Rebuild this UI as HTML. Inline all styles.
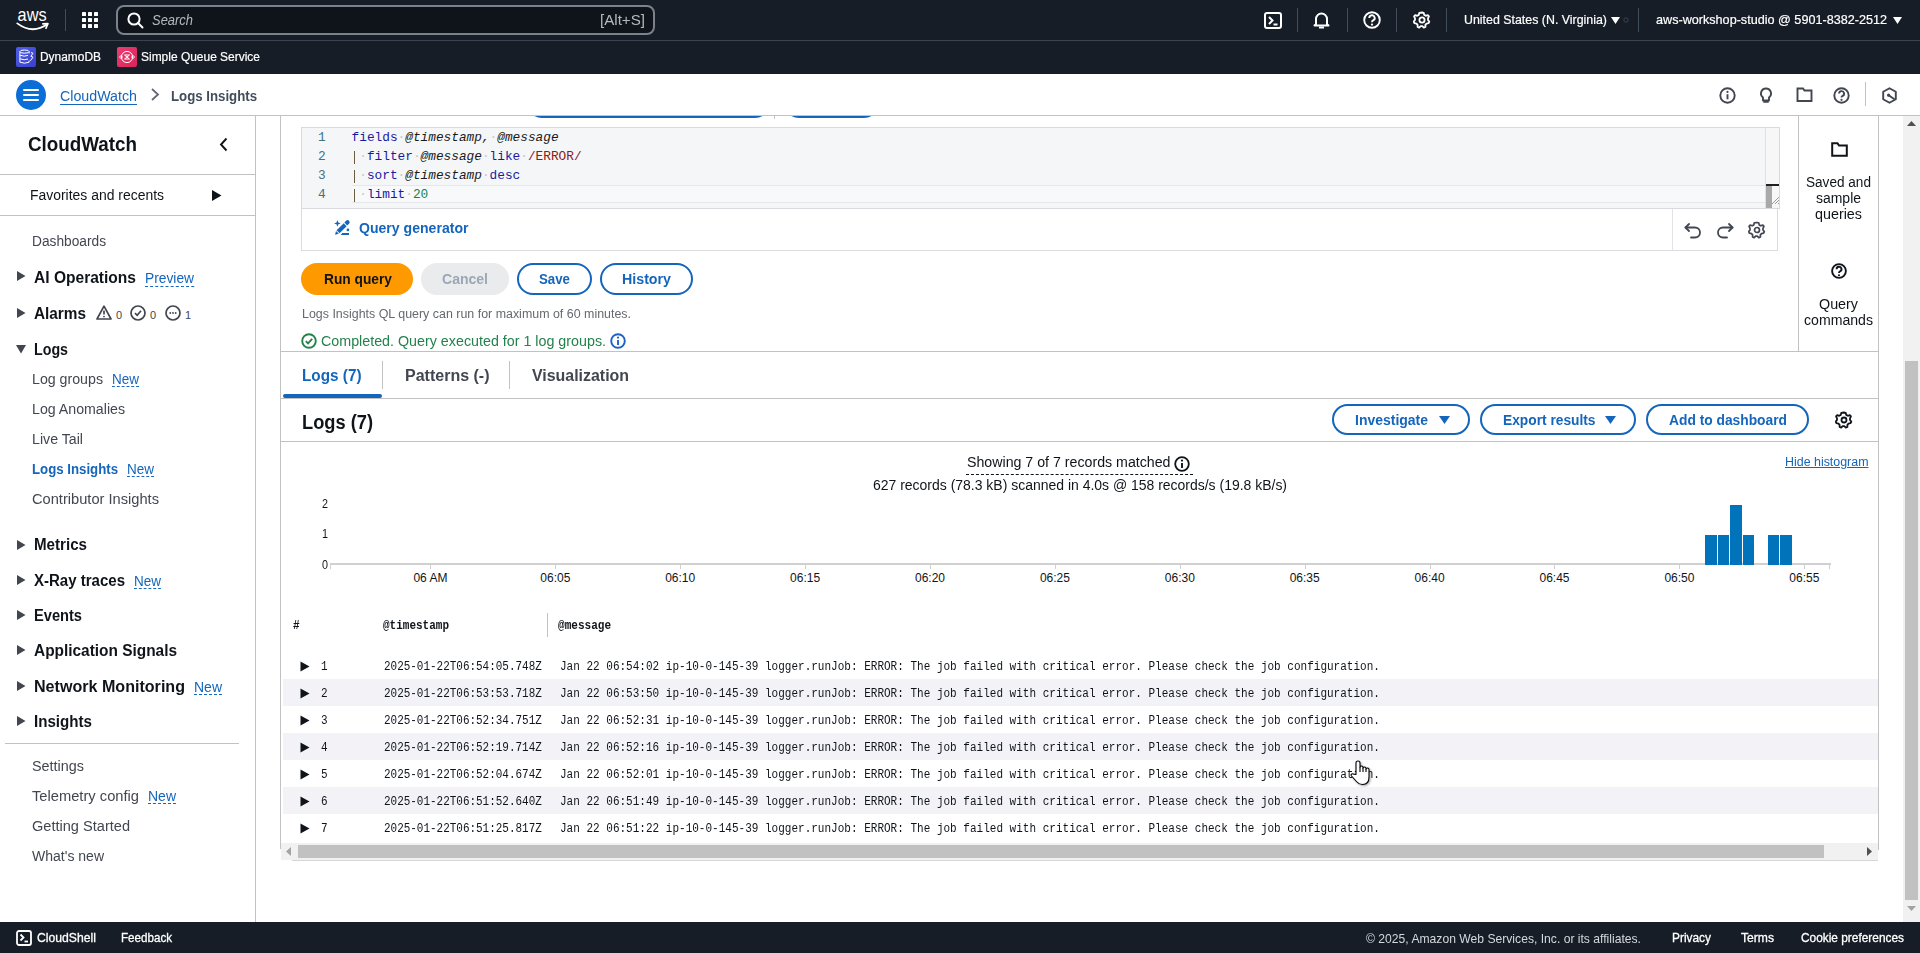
<!DOCTYPE html>
<html><head><meta charset="utf-8"><title>CloudWatch Logs Insights</title>
<style>
html,body{margin:0;padding:0;width:1920px;height:953px;overflow:hidden;background:#fff;}
body{position:relative;font-family:"Liberation Sans", sans-serif;color:#0f141a;}
.t{position:absolute;white-space:pre;}
.r{position:absolute;box-sizing:border-box;}
</style></head><body>
<div class="r" style="left:0px;top:0px;width:1920px;height:74px;background:#161d26;"></div>
<div class="r" style="left:0px;top:40px;width:1920px;height:1px;background:#3d4450;"></div>
<svg class="r" style="left:10px;top:5px;" width="44" height="28" viewBox="0 0 44 28"><text x="7.6" y="15.7" font-family="Liberation Sans" font-size="18.5" fill="#fff" textLength="29" lengthAdjust="spacingAndGlyphs">aws</text><path d="M7.3 18.4 Q22.5 29.8 37.6 19" stroke="#fff" stroke-width="1.8" fill="none" stroke-linecap="round"/><path d="M32.9 18.9 L37.8 18.6 L36 23.2" stroke="#fff" stroke-width="1.7" fill="none" stroke-linecap="round" stroke-linejoin="round"/></svg>
<div class="r" style="left:65px;top:9px;width:1px;height:22px;background:#414d5c;"></div>
<svg class="r" style="left:82px;top:12px;" width="16" height="16" viewBox="0 0 16 16"><rect x="0" y="0" width="4" height="4" rx="0.6" fill="#fff"/><rect x="0" y="6" width="4" height="4" rx="0.6" fill="#fff"/><rect x="0" y="12" width="4" height="4" rx="0.6" fill="#fff"/><rect x="6" y="0" width="4" height="4" rx="0.6" fill="#fff"/><rect x="6" y="6" width="4" height="4" rx="0.6" fill="#fff"/><rect x="6" y="12" width="4" height="4" rx="0.6" fill="#fff"/><rect x="12" y="0" width="4" height="4" rx="0.6" fill="#fff"/><rect x="12" y="6" width="4" height="4" rx="0.6" fill="#fff"/><rect x="12" y="12" width="4" height="4" rx="0.6" fill="#fff"/></svg>
<div class="r" style="left:116px;top:5px;width:539px;height:30px;border:2px solid #7b828c;border-radius:8px;background:#0f131a;"></div>
<svg class="r" style="left:127px;top:12px;" width="17" height="17" viewBox="0 0 17 17"><circle cx="7" cy="7" r="5.6" stroke="#fff" stroke-width="2" fill="none"/><path d="M11 11 L15.5 15.5" stroke="#fff" stroke-width="2" stroke-linecap="round"/></svg>
<div class="t" style="left:152px;top:13.00px;font-size:14px;line-height:14px;color:#b4b9c0;font-style:italic;transform:scaleX(0.9243);transform-origin:0 0;">Search</div>
<div class="t" style="left:600px;top:13.00px;font-size:14px;line-height:14px;color:#b4b9c0;transform:scaleX(1.0807);transform-origin:0 0;">[Alt+S]</div>
<svg class="r" style="left:1264px;top:12px;" width="18" height="17" viewBox="0 0 18 17"><rect x="1" y="1" width="16" height="15" rx="2" stroke="#fff" stroke-width="2" fill="none"/><path d="M5 5 L8.5 8.5 L5 12" stroke="#fff" stroke-width="2" fill="none"/><path d="M9.5 12.5 H13.5" stroke="#fff" stroke-width="2"/></svg>
<div class="r" style="left:1297px;top:8px;width:1px;height:24px;background:#414d5c;"></div>
<svg class="r" style="left:1313px;top:11px;" width="17" height="18" viewBox="0 0 17 18"><path d="M3 13 V8 a5.5 5.5 0 0 1 11 0 V13 L15.5 14.5 H1.5 Z" stroke="#fff" stroke-width="2" fill="none" stroke-linejoin="round"/><path d="M6 16.5 H11" stroke="#fff" stroke-width="2"/></svg>
<div class="r" style="left:1347px;top:8px;width:1px;height:24px;background:#414d5c;"></div>
<svg class="r" style="left:1363px;top:11px;" width="18" height="18" viewBox="0 0 18 18"><circle cx="9" cy="9" r="7.8" stroke="#fff" stroke-width="1.9" fill="none"/><path d="M6.3 7 a2.7 2.7 0 1 1 3.8 2.4 c-0.8 0.4 -1.1 0.9 -1.1 1.8" stroke="#fff" stroke-width="1.9" fill="none"/><circle cx="9" cy="13.6" r="1.1" fill="#fff"/></svg>
<div class="r" style="left:1396px;top:8px;width:1px;height:24px;background:#414d5c;"></div>
<svg class="r" style="left:1413px;top:11px;" width="18" height="18" viewBox="0 0 18 18"><path d="M9 1.5 l1.7 0.3 0.5 2.1 1.6 0.9 2-0.7 1.1 1.3 -0.9 2 0 1.6 1.3 1.6 -0.7 1.6 -2.1 0.4 -1.1 1.3 0 2.1 -1.6 0.6 -1.5-1.5 h-1.6 l-1.5 1.5 -1.6-0.6 0-2.1 -1.1-1.3 -2.1-0.4 -0.7-1.6 1.3-1.6 0-1.6 -0.9-2 1.1-1.3 2 0.7 1.6-0.9 0.5-2.1 z" stroke="#fff" stroke-width="1.8" fill="none" stroke-linejoin="round"/><circle cx="9" cy="9" r="2.6" stroke="#fff" stroke-width="1.8" fill="none"/></svg>
<div class="r" style="left:1446px;top:8px;width:1px;height:24px;background:#414d5c;"></div>
<div class="t" style="left:1464px;top:13.00px;font-size:13px;line-height:13px;color:#fff;transform:scaleX(0.9530);transform-origin:0 0;-webkit-text-stroke:0.2px #fff;">United States (N. Virginia)</div>
<svg class="r" style="left:1611px;top:17px;" width="9" height="7" viewBox="0 0 9 7"><path d="M0 0 H9 L4.5 7 Z" fill="#fff"/></svg>
<svg class="r" style="left:1622px;top:16px;" width="8" height="8" viewBox="0 0 8 8"><circle cx="4" cy="4" r="2.2" stroke="#3a4350" stroke-width="1" fill="none"/></svg>
<div class="r" style="left:1638px;top:8px;width:1px;height:24px;background:#414d5c;"></div>
<div class="t" style="left:1656px;top:13.00px;font-size:13px;line-height:13px;color:#fff;transform:scaleX(0.9708);transform-origin:0 0;-webkit-text-stroke:0.2px #fff;">aws-workshop-studio @ 5901-8382-2512</div>
<svg class="r" style="left:1893px;top:17px;" width="9" height="7" viewBox="0 0 9 7"><path d="M0 0 H9 L4.5 7 Z" fill="#fff"/></svg>
<div class="r" style="left:16px;top:47px;width:20px;height:20px;background:linear-gradient(135deg,#4d5fe6,#3a3fd0);border-radius:2px;"></div>
<svg class="r" style="left:16px;top:47px;" width="20" height="20" viewBox="0 0 20 20"><g stroke="#fff" stroke-width="1" fill="none"><ellipse cx="8.5" cy="4.6" rx="4.6" ry="1.6"/><path d="M3.9 4.6 V15.2 M13.1 4.6 V6.5 M13.1 13.5 V15.2"/><path d="M3.9 8.2 Q8.5 10 12 8.4 M3.9 11.8 Q8.5 13.6 12 12 M3.9 15.2 Q8.5 17.2 13.1 15.2"/><path d="M15 5.5 L17 6.3 L14.8 9.3 L17 10.2 L14.4 13.8"/></g></svg>
<div class="t" style="left:40px;top:50.75px;font-size:12.5px;line-height:12.5px;color:#fff;transform:scaleX(0.9543);transform-origin:0 0;-webkit-text-stroke:0.2px #fff;">DynamoDB</div>
<div class="r" style="left:117px;top:47px;width:20px;height:20px;background:linear-gradient(135deg,#ee3d71,#d7245b);border-radius:2px;"></div>
<svg class="r" style="left:117px;top:47px;" width="20" height="20" viewBox="0 0 20 20"><g stroke="#fff" stroke-width="1" fill="none"><circle cx="10" cy="10" r="5.6"/><path d="M2.5 10 L4 8.5 L5.5 10 L4 11.5 Z M14.5 10 L16 8.5 L17.5 10 L16 11.5 Z"/><path d="M7.5 8 H12.5 L10 10 Z M7.5 12 H12.5 L10 10 Z"/></g></svg>
<div class="t" style="left:141px;top:50.75px;font-size:12.5px;line-height:12.5px;color:#fff;transform:scaleX(0.9568);transform-origin:0 0;-webkit-text-stroke:0.2px #fff;">Simple Queue Service</div>
<div class="r" style="left:0px;top:115px;width:1920px;height:1px;background:#c2c2c2;"></div>
<div class="r" style="left:16px;top:80px;width:30px;height:30px;border-radius:50%;background:#0b6dd6;"></div>
<svg class="r" style="left:23px;top:88px;" width="16" height="14" viewBox="0 0 16 14"><path d="M1 2 H15 M1 7 H15 M1 12 H15" stroke="#fff" stroke-width="2" stroke-linecap="round"/></svg>
<div class="t" style="left:60px;top:89.00px;font-size:14px;line-height:14px;color:#1465bb;transform:scaleX(1.0165);transform-origin:0 0;text-decoration:underline;text-underline-offset:3px;">CloudWatch</div>
<svg class="r" style="left:150px;top:88px;" width="10" height="13" viewBox="0 0 10 13"><path d="M2 1 L8 6.5 L2 12" stroke="#656871" stroke-width="1.8" fill="none"/></svg>
<div class="t" style="left:171px;top:89.00px;font-size:14px;line-height:14px;font-weight:700;color:#414d5c;transform:scaleX(0.9451);transform-origin:0 0;">Logs Insights</div>
<svg class="r" style="left:1719px;top:87px;" width="17" height="17" viewBox="0 0 17 17"><circle cx="8.5" cy="8.5" r="7.2" stroke="#424650" stroke-width="1.9" fill="none"/><path d="M8.5 7.2 V12.3" stroke="#424650" stroke-width="1.9" fill="none"/><circle cx="8.5" cy="4.9" r="1.1" fill="#424650"/></svg>
<svg class="r" style="left:1758px;top:87px;" width="16" height="17" viewBox="0 0 16 17"><path d="M8 1.5 a5 5 0 0 0 -3 9 v3 h6 v-3 a5 5 0 0 0 -3 -9 z" stroke="#424650" stroke-width="1.9" fill="none" stroke-linejoin="round"/><path d="M5.3 14.8 h5.4" stroke="#424650" stroke-width="1.9" fill="none"/></svg>
<svg class="r" style="left:1796px;top:87px;" width="17" height="16" viewBox="0 0 17 16"><path d="M1.5 1.5 H7 L8.5 3.5 H15.5 V14 H1.5 Z" stroke="#424650" stroke-width="1.9" fill="none" stroke-linejoin="miter"/></svg>
<svg class="r" style="left:1833px;top:87px;" width="17" height="17" viewBox="0 0 17 17"><circle cx="8.5" cy="8.5" r="7.2" stroke="#424650" stroke-width="1.9" fill="none"/><path d="M6.1 6.6 a2.5 2.5 0 1 1 3.5 2.3 c-0.7 0.3 -1.1 0.9 -1.1 1.6" stroke="#424650" stroke-width="1.9" fill="none"/><circle cx="8.5" cy="12.8" r="1.1" fill="#424650"/></svg>
<div class="r" style="left:1865px;top:82px;width:1px;height:24px;background:#c2c2c2;"></div>
<svg class="r" style="left:1881px;top:87px;" width="17" height="17" viewBox="0 0 17 17"><path d="M8.5 1.2 L14.8 4.8 V12.2 L8.5 15.8 L2.2 12.2 V4.8 Z" stroke="#424650" stroke-width="1.9" fill="none" stroke-linejoin="round"/><circle cx="7.6" cy="8.2" r="1.6" fill="#424650"/><path d="M7.6 8.2 L13.5 12.2" stroke="#424650" stroke-width="1.9" fill="none"/></svg>
<div class="r" style="left:255px;top:116px;width:1px;height:806px;background:#c2c2c2;"></div>
<div class="t" style="left:28px;top:134.00px;font-size:20px;line-height:20px;font-weight:700;color:#0f141a;transform:scaleX(0.9403);transform-origin:0 0;">CloudWatch</div>
<svg class="r" style="left:219px;top:137px;" width="9" height="15" viewBox="0 0 9 15"><path d="M7.5 1.5 L2 7.5 L7.5 13.5" stroke="#0f141a" stroke-width="1.9" fill="none"/></svg>
<div class="r" style="left:0px;top:174px;width:255px;height:1px;background:#c2c2c2;"></div>
<div class="t" style="left:30px;top:188.00px;font-size:14px;line-height:14px;color:#0f141a;transform:scaleX(0.9954);transform-origin:0 0;">Favorites and recents</div>
<svg class="r" style="left:212px;top:190px;" width="10" height="11" viewBox="0 0 10 11"><path d="M0 0 L9.5 5.5 L0 11 Z" fill="#0f141a"/></svg>
<div class="r" style="left:0px;top:215px;width:255px;height:1px;background:#c2c2c2;"></div>
<div class="t" style="left:32px;top:234.00px;font-size:14px;line-height:14px;color:#424650;transform:scaleX(0.9801);transform-origin:0 0;">Dashboards</div>
<svg class="r" style="left:17px;top:271px;" width="9" height="10" viewBox="0 0 9 10"><path d="M0 0 L8.5 5 L0 10 Z" fill="#424650"/></svg>
<div class="t" style="left:34px;top:269.50px;font-size:16px;line-height:16px;font-weight:700;color:#0f141a;transform:scaleX(0.9723);transform-origin:0 0;">AI Operations</div>
<div class="t" style="left:145px;top:271.00px;font-size:14px;line-height:14px;color:#1465bb;transform:scaleX(0.9840);transform-origin:0 0;border-bottom:1px dashed #1465bb;line-height:15px;">Preview</div>
<svg class="r" style="left:17px;top:308px;" width="9" height="10" viewBox="0 0 9 10"><path d="M0 0 L8.5 5 L0 10 Z" fill="#424650"/></svg>
<div class="t" style="left:34px;top:305.50px;font-size:16px;line-height:16px;font-weight:700;color:#0f141a;transform:scaleX(0.9585);transform-origin:0 0;">Alarms</div>
<svg class="r" style="left:96px;top:305px;" width="16" height="15" viewBox="0 0 16 15"><path d="M8 1.2 L15 14 H1 Z" stroke="#424650" stroke-width="1.7" fill="none" stroke-linejoin="round"/><path d="M8 5.5 V9.5" stroke="#424650" stroke-width="1.7"/><circle cx="8" cy="11.6" r="0.9" fill="#424650"/></svg>
<div class="t" style="left:116px;top:309.50px;font-size:11px;line-height:11px;color:#424650;">0</div>
<svg class="r" style="left:130px;top:305px;" width="16" height="16" viewBox="0 0 16 16"><circle cx="8" cy="8" r="7" stroke="#424650" stroke-width="1.7" fill="none"/><path d="M5 8.2 L7.2 10.3 L11 5.8" stroke="#424650" stroke-width="1.7" fill="none"/></svg>
<div class="t" style="left:150px;top:309.50px;font-size:11px;line-height:11px;color:#424650;">0</div>
<svg class="r" style="left:165px;top:305px;" width="16" height="16" viewBox="0 0 16 16"><circle cx="8" cy="8" r="7" stroke="#424650" stroke-width="1.7" fill="none"/><circle cx="5.3" cy="8" r="0.9" fill="#424650"/><circle cx="8" cy="8" r="0.9" fill="#424650"/><circle cx="10.7" cy="8" r="0.9" fill="#424650"/></svg>
<div class="t" style="left:185px;top:309.50px;font-size:11px;line-height:11px;color:#424650;">1</div>
<svg class="r" style="left:16px;top:345px;" width="10" height="9" viewBox="0 0 10 9"><path d="M0 0 H10 L5 8.5 Z" fill="#424650"/></svg>
<div class="t" style="left:34px;top:341.50px;font-size:16px;line-height:16px;font-weight:700;color:#0f141a;transform:scaleX(0.8896);transform-origin:0 0;">Logs</div>
<div class="t" style="left:32px;top:372.00px;font-size:14px;line-height:14px;color:#424650;transform:scaleX(1.0134);transform-origin:0 0;">Log groups</div>
<div class="t" style="left:112px;top:372.00px;font-size:14px;line-height:14px;color:#1465bb;transform:scaleX(0.9637);transform-origin:0 0;border-bottom:1px dashed #1465bb;">New</div>
<div class="t" style="left:32px;top:402.00px;font-size:14px;line-height:14px;color:#424650;transform:scaleX(1.0126);transform-origin:0 0;">Log Anomalies</div>
<div class="t" style="left:32px;top:432.00px;font-size:14px;line-height:14px;color:#424650;transform:scaleX(1.0133);transform-origin:0 0;">Live Tail</div>
<div class="t" style="left:32px;top:462.00px;font-size:14px;line-height:14px;font-weight:700;color:#1465bb;transform:scaleX(0.9451);transform-origin:0 0;">Logs Insights</div>
<div class="t" style="left:127px;top:462.00px;font-size:14px;line-height:14px;color:#1465bb;transform:scaleX(0.9637);transform-origin:0 0;border-bottom:1px dashed #1465bb;">New</div>
<div class="t" style="left:32px;top:492.00px;font-size:14px;line-height:14px;color:#424650;transform:scaleX(1.0461);transform-origin:0 0;">Contributor Insights</div>
<svg class="r" style="left:17px;top:540px;" width="9" height="10" viewBox="0 0 9 10"><path d="M0 0 L8.5 5 L0 10 Z" fill="#424650"/></svg>
<div class="t" style="left:34px;top:536.50px;font-size:16px;line-height:16px;font-weight:700;color:#0f141a;transform:scaleX(0.9459);transform-origin:0 0;">Metrics</div>
<svg class="r" style="left:17px;top:575px;" width="9" height="10" viewBox="0 0 9 10"><path d="M0 0 L8.5 5 L0 10 Z" fill="#424650"/></svg>
<div class="t" style="left:34px;top:572.50px;font-size:16px;line-height:16px;font-weight:700;color:#0f141a;transform:scaleX(0.9386);transform-origin:0 0;">X-Ray traces</div>
<div class="t" style="left:134px;top:574.00px;font-size:14px;line-height:14px;color:#1465bb;transform:scaleX(0.9637);transform-origin:0 0;border-bottom:1px dashed #1465bb;">New</div>
<svg class="r" style="left:17px;top:610px;" width="9" height="10" viewBox="0 0 9 10"><path d="M0 0 L8.5 5 L0 10 Z" fill="#424650"/></svg>
<div class="t" style="left:34px;top:607.50px;font-size:16px;line-height:16px;font-weight:700;color:#0f141a;transform:scaleX(0.9148);transform-origin:0 0;">Events</div>
<svg class="r" style="left:17px;top:645px;" width="9" height="10" viewBox="0 0 9 10"><path d="M0 0 L8.5 5 L0 10 Z" fill="#424650"/></svg>
<div class="t" style="left:34px;top:642.50px;font-size:16px;line-height:16px;font-weight:700;color:#0f141a;transform:scaleX(0.9632);transform-origin:0 0;">Application Signals</div>
<svg class="r" style="left:17px;top:681px;" width="9" height="10" viewBox="0 0 9 10"><path d="M0 0 L8.5 5 L0 10 Z" fill="#424650"/></svg>
<div class="t" style="left:34px;top:678.50px;font-size:16px;line-height:16px;font-weight:700;color:#0f141a;transform:scaleX(1.0052);transform-origin:0 0;">Network Monitoring</div>
<div class="t" style="left:194px;top:680.00px;font-size:14px;line-height:14px;color:#1465bb;transform:scaleX(0.9994);transform-origin:0 0;border-bottom:1px dashed #1465bb;">New</div>
<svg class="r" style="left:17px;top:716px;" width="9" height="10" viewBox="0 0 9 10"><path d="M0 0 L8.5 5 L0 10 Z" fill="#424650"/></svg>
<div class="t" style="left:34px;top:713.50px;font-size:16px;line-height:16px;font-weight:700;color:#0f141a;transform:scaleX(0.9455);transform-origin:0 0;">Insights</div>
<div class="r" style="left:5px;top:743px;width:234px;height:1px;background:#c2c2c2;"></div>
<div class="t" style="left:32px;top:759.00px;font-size:14px;line-height:14px;color:#424650;transform:scaleX(1.0278);transform-origin:0 0;">Settings</div>
<div class="t" style="left:32px;top:789.00px;font-size:14px;line-height:14px;color:#424650;transform:scaleX(1.0497);transform-origin:0 0;">Telemetry config</div>
<div class="t" style="left:148px;top:789.00px;font-size:14px;line-height:14px;color:#1465bb;transform:scaleX(0.9994);transform-origin:0 0;border-bottom:1px dashed #1465bb;">New</div>
<div class="t" style="left:32px;top:819.00px;font-size:14px;line-height:14px;color:#424650;transform:scaleX(1.0407);transform-origin:0 0;">Getting Started</div>
<div class="t" style="left:32px;top:849.00px;font-size:14px;line-height:14px;color:#424650;transform:scaleX(1.0011);transform-origin:0 0;">What's new</div>
<div class="r" style="left:0px;top:922px;width:1920px;height:31px;background:#161d26;"></div>
<svg class="r" style="left:16px;top:930px;" width="16" height="16" viewBox="0 0 16 16"><rect x="1" y="1" width="14" height="14" rx="2" stroke="#fff" stroke-width="1.8" fill="none"/><path d="M4.5 4.5 L7.5 7.5 L4.5 10.5" stroke="#fff" stroke-width="1.8" fill="none"/><path d="M8.5 11.5 H12" stroke="#fff" stroke-width="1.8"/></svg>
<div class="t" style="left:37px;top:931.75px;font-size:12.5px;line-height:12.5px;color:#fff;transform:scaleX(0.9757);transform-origin:0 0;-webkit-text-stroke:0.3px #fff;">CloudShell</div>
<div class="t" style="left:121px;top:931.75px;font-size:12.5px;line-height:12.5px;color:#fff;transform:scaleX(0.9289);transform-origin:0 0;-webkit-text-stroke:0.3px #fff;">Feedback</div>
<div class="t" style="left:1366px;top:931.50px;font-size:13px;line-height:13px;color:#d5d9de;transform:scaleX(0.9337);transform-origin:0 0;">© 2025, Amazon Web Services, Inc. or its affiliates.</div>
<div class="t" style="left:1672px;top:932.25px;font-size:12.5px;line-height:12.5px;color:#fff;transform:scaleX(0.9516);transform-origin:0 0;-webkit-text-stroke:0.3px #fff;">Privacy</div>
<div class="t" style="left:1741px;top:932.25px;font-size:12.5px;line-height:12.5px;color:#fff;transform:scaleX(0.9697);transform-origin:0 0;-webkit-text-stroke:0.3px #fff;">Terms</div>
<div class="t" style="left:1801px;top:932.25px;font-size:12.5px;line-height:12.5px;color:#fff;transform:scaleX(0.9501);transform-origin:0 0;-webkit-text-stroke:0.3px #fff;">Cookie preferences</div>
<div class="r" style="left:1903px;top:116px;width:17px;height:806px;background:#f1f1f1;"></div>
<div class="r" style="left:1905px;top:361px;width:13px;height:539px;background:#c1c1c1;"></div>
<svg class="r" style="left:1907px;top:121px;" width="9" height="5" viewBox="0 0 9 5"><path d="M0 5 L4.5 0 L9 5 Z" fill="#505050"/></svg>
<svg class="r" style="left:1907px;top:906px;" width="9" height="5" viewBox="0 0 9 5"><path d="M0 0 L4.5 5 L9 0 Z" fill="#a3a3a3"/></svg>
<div class="r" style="left:530px;top:116px;width:360px;height:4px;overflow:hidden;"><div class="r" style="left:-3px;top:-28px;width:243px;height:30px;border:2px solid #1465bb;border-radius:16px;"></div><div class="r" style="left:254px;top:-28px;width:95px;height:30px;border:2px solid #1465bb;border-radius:16px;"></div></div>
<div class="r" style="left:774px;top:116px;width:1px;height:3px;background:#c2c2c2;"></div>
<div class="r" style="left:280px;top:116px;width:1px;height:733px;background:#c2c2c2;"></div>
<div class="r" style="left:1878px;top:116px;width:1px;height:734px;background:#c2c2c2;"></div>
<div class="r" style="left:292px;top:860px;width:1586px;height:1px;background:#d5d5da;"></div>
<div class="r" style="left:1798px;top:116px;width:1px;height:236px;background:#c2c2c2;"></div>
<div class="r" style="left:301px;top:127px;width:1479px;height:82px;background:#f5f6f8;border:1px solid #d9d9de;"></div>
<div class="r" style="left:352px;top:185px;width:1413px;height:18px;background:#f8f9fb;border-top:1px solid #e6e7ea;border-bottom:1px solid #e6e7ea;"></div>
<div class="r" style="left:1765px;top:128px;width:14px;height:80px;background:#f7f7f7;border-left:1px solid #e0e0e0;"></div>
<div class="r" style="left:1766px;top:184px;width:13px;height:2px;background:#202020;"></div>
<div class="r" style="left:1766px;top:186px;width:6px;height:22px;background:#a9a9a9;"></div>
<svg class="r" style="left:1768px;top:190px;" width="11" height="18" viewBox="0 0 11 18"><path d="M11 7 L4 14 M11 10 L7 14 M11 13 L10 14" stroke="#9a9a9a" stroke-width="1"/></svg>
<div class="t" style="left:318px;top:132.10px;font-size:12.8px;line-height:12.8px;font-family:'Liberation Mono', monospace;color:#44727f;">1</div>
<div class="t" style="left:318px;top:151.10px;font-size:12.8px;line-height:12.8px;font-family:'Liberation Mono', monospace;color:#44727f;">2</div>
<div class="t" style="left:318px;top:170.10px;font-size:12.8px;line-height:12.8px;font-family:'Liberation Mono', monospace;color:#44727f;">3</div>
<div class="t" style="left:318px;top:189.10px;font-size:12.8px;line-height:12.8px;font-family:'Liberation Mono', monospace;color:#44727f;">4</div>
<div class="t" style="left:351.6px;top:132.10px;font-size:12.8px;line-height:12.8px;font-family:'Liberation Mono', monospace;letter-spacing:-0.01499999999999968px;"><span style="color:#1a1aa0;">fields</span><span style="color:#c8c8c8;">·</span><span style="color:#1a1a1a;font-style:italic;">@timestamp,</span><span style="color:#c8c8c8;">·</span><span style="color:#1a1a1a;font-style:italic;">@message</span></div>
<div class="t" style="left:351.6px;top:151.10px;font-size:12.8px;line-height:12.8px;font-family:'Liberation Mono', monospace;letter-spacing:-0.01499999999999968px;"><span style="color:#7a5c2e;"> </span><span style="color:#c8c8c8;">·</span><span style="color:#1a1aa0;">filter</span><span style="color:#c8c8c8;">·</span><span style="color:#1a1a1a;font-style:italic;">@message</span><span style="color:#c8c8c8;">·</span><span style="color:#1a1aa0;">like</span><span style="color:#c8c8c8;">·</span><span style="color:#8b1a1a;">/ERROR/</span></div>
<div class="t" style="left:351.6px;top:170.10px;font-size:12.8px;line-height:12.8px;font-family:'Liberation Mono', monospace;letter-spacing:-0.01499999999999968px;"><span style="color:#7a5c2e;"> </span><span style="color:#c8c8c8;">·</span><span style="color:#1a1aa0;">sort</span><span style="color:#c8c8c8;">·</span><span style="color:#1a1a1a;font-style:italic;">@timestamp</span><span style="color:#c8c8c8;">·</span><span style="color:#1a1aa0;">desc</span></div>
<div class="t" style="left:351.6px;top:189.10px;font-size:12.8px;line-height:12.8px;font-family:'Liberation Mono', monospace;letter-spacing:-0.01499999999999968px;"><span style="color:#7a5c2e;"> </span><span style="color:#c8c8c8;">·</span><span style="color:#1a1aa0;">limit</span><span style="color:#c8c8c8;">·</span><span style="color:#098658;">20</span></div>
<div class="r" style="left:353.6px;top:150.5px;width:1.4px;height:13.5px;background:#6e5b3c;"></div>
<div class="r" style="left:353.6px;top:169.5px;width:1.4px;height:13.5px;background:#6e5b3c;"></div>
<div class="r" style="left:353.6px;top:188.5px;width:1.4px;height:13.5px;background:#6e5b3c;"></div>
<div class="r" style="left:301px;top:209px;width:1477px;height:42px;background:#fff;border:1px solid #dcdce0;border-top:none;"></div>
<div class="r" style="left:1672px;top:209px;width:1px;height:41px;background:#e3e3e6;"></div>
<svg class="r" style="left:328px;top:215px;" width="30" height="25" viewBox="0 0 30 25"><path d="M9.4 5.1 L10.3 7.5 L12.8 8.4 L10.3 9.3 L9.4 11.8 L8.5 9.3 L6 8.4 L8.5 7.5 Z" fill="#1465bb"/><g transform="translate(7.1,19.7) rotate(-44.8)"><path d="M0 0 L3.3 -2.05 V2.05 Z" fill="#1465bb"/><rect x="4.2" y="-2.05" width="10" height="4.1" fill="#1465bb"/><path d="M15.1 -2.05 H17.6 a2.05 2.05 0 0 1 0 4.1 H15.1 Z" fill="#1465bb"/></g><circle cx="19.9" cy="14.9" r="1.35" fill="#1465bb"/><path d="M12.6 19.9 L14.4 18.1 H21 V19.9 Z" fill="#1465bb"/></svg>
<div class="t" style="left:358.5px;top:221.00px;font-size:14px;line-height:14px;font-weight:700;color:#1465bb;transform:scaleX(1.0052);transform-origin:0 0;">Query generator</div>
<svg class="r" style="left:1684px;top:222px;" width="18" height="17" viewBox="0 0 18 17"><path d="M5 2 L1.5 5.5 L5 9" stroke="#424650" stroke-width="1.8" fill="none" stroke-linecap="round" stroke-linejoin="round"/><path d="M1.5 5.5 H11 a5 5 0 0 1 0 10 H7" stroke="#424650" stroke-width="1.8" fill="none" stroke-linecap="round" stroke-linejoin="round"/></svg>
<svg class="r" style="left:1716px;top:222px;" width="18" height="17" viewBox="0 0 18 17"><path d="M13 2 L16.5 5.5 L13 9" stroke="#424650" stroke-width="1.8" fill="none" stroke-linecap="round" stroke-linejoin="round"/><path d="M16.5 5.5 H7 a5 5 0 0 0 0 10 H11" stroke="#424650" stroke-width="1.8" fill="none" stroke-linecap="round" stroke-linejoin="round"/></svg>
<svg class="r" style="left:1748px;top:221px;" width="18" height="18" viewBox="0 0 18 18"><path d="M9 1.5 l1.7 0.3 0.5 2.1 1.6 0.9 2-0.7 1.1 1.3 -0.9 2 0 1.6 1.3 1.6 -0.7 1.6 -2.1 0.4 -1.1 1.3 0 2.1 -1.6 0.6 -1.5-1.5 h-1.6 l-1.5 1.5 -1.6-0.6 0-2.1 -1.1-1.3 -2.1-0.4 -0.7-1.6 1.3-1.6 0-1.6 -0.9-2 1.1-1.3 2 0.7 1.6-0.9 0.5-2.1 z" stroke="#424650" stroke-width="1.7" fill="none" stroke-linejoin="round"/><circle cx="9" cy="9" r="2.5" stroke="#424650" stroke-width="1.7" fill="none"/></svg>
<div class="r" style="left:301px;top:263px;width:112px;height:32px;background:#ff9900;border-radius:16px;"></div>
<div class="t" style="left:323.5px;top:272.00px;font-size:14px;line-height:14px;font-weight:700;color:#0f141a;transform:scaleX(0.9822);transform-origin:0 0;">Run query</div>
<div class="r" style="left:421px;top:263px;width:88px;height:32px;background:#e9ebed;border-radius:16px;"></div>
<div class="t" style="left:442px;top:272.00px;font-size:14px;line-height:14px;font-weight:700;color:#9ba7b6;transform:scaleX(1.0017);transform-origin:0 0;">Cancel</div>
<div class="r" style="left:517px;top:263px;width:75px;height:32px;border:2px solid #1465bb;border-radius:16px;"></div>
<div class="t" style="left:539px;top:272.00px;font-size:14px;line-height:14px;font-weight:700;color:#1465bb;transform:scaleX(0.9479);transform-origin:0 0;">Save</div>
<div class="r" style="left:600px;top:263px;width:93px;height:32px;border:2px solid #1465bb;border-radius:16px;"></div>
<div class="t" style="left:622px;top:272.00px;font-size:14px;line-height:14px;font-weight:700;color:#1465bb;transform:scaleX(1.0159);transform-origin:0 0;">History</div>
<div class="t" style="left:301.5px;top:308.00px;font-size:12px;line-height:12px;color:#656871;transform:scaleX(1.0356);transform-origin:0 0;">Logs Insights QL query can run for maximum of 60 minutes.</div>
<svg class="r" style="left:301px;top:333px;" width="16" height="16" viewBox="0 0 16 16"><circle cx="8" cy="8" r="6.8" stroke="#23824b" stroke-width="1.9" fill="none"/><path d="M4.8 8.2 L7 10.4 L11.2 5.8" stroke="#23824b" stroke-width="1.9" fill="none"/></svg>
<div class="t" style="left:321px;top:334.00px;font-size:14px;line-height:14px;color:#23824b;transform:scaleX(1.0201);transform-origin:0 0;">Completed. Query executed for 1 log groups.</div>
<svg class="r" style="left:610px;top:333px;" width="16" height="16" viewBox="0 0 16 16"><circle cx="8" cy="8" r="6.8" stroke="#1d63c5" stroke-width="1.9" fill="none"/><path d="M8 7 V12" stroke="#1d63c5" stroke-width="1.9"/><circle cx="8" cy="4.6" r="1.1" fill="#1465bb"/></svg>
<svg class="r" style="left:1831px;top:142px;" width="17" height="15" viewBox="0 0 17 15"><path d="M1.2 1.2 H6.5 L8 3.5 H15.8 V13.8 H1.2 Z" stroke="#0f141a" stroke-width="2" fill="none" stroke-linejoin="miter"/></svg>
<div class="t" style="left:1806px;top:175.00px;font-size:14px;line-height:14px;color:#0f141a;transform:scaleX(0.9708);transform-origin:0 0;">Saved and</div>
<div class="t" style="left:1816px;top:191.00px;font-size:14px;line-height:14px;color:#0f141a;transform:scaleX(0.9969);transform-origin:0 0;">sample</div>
<div class="t" style="left:1815px;top:207.00px;font-size:14px;line-height:14px;color:#0f141a;transform:scaleX(1.0235);transform-origin:0 0;">queries</div>
<svg class="r" style="left:1831px;top:263px;" width="16" height="16" viewBox="0 0 16 16"><circle cx="8" cy="8" r="6.9" stroke="#0f141a" stroke-width="1.9" fill="none"/><path d="M5.6 6.2 a2.45 2.45 0 1 1 3.4 2.25 c-0.7 0.3 -1 0.8 -1 1.6" stroke="#0f141a" stroke-width="1.9" fill="none"/><circle cx="8" cy="12.2" r="1.05" fill="#0f141a"/></svg>
<div class="t" style="left:1819px;top:297.00px;font-size:14px;line-height:14px;color:#0f141a;transform:scaleX(1.0230);transform-origin:0 0;">Query</div>
<div class="t" style="left:1804px;top:313.00px;font-size:14px;line-height:14px;color:#0f141a;transform:scaleX(1.0078);transform-origin:0 0;">commands</div>
<div class="r" style="left:280px;top:351px;width:1599px;height:1px;background:#c2c2c2;"></div>
<div class="t" style="left:302px;top:367.50px;font-size:16px;line-height:16px;font-weight:700;color:#1465bb;transform:scaleX(0.9563);transform-origin:0 0;">Logs (7)</div>
<div class="r" style="left:283px;top:394px;width:99px;height:4px;background:#1465bb;border-radius:2px;"></div>
<div class="r" style="left:382px;top:361px;width:1px;height:28px;background:#c2c2c2;"></div>
<div class="t" style="left:404.5px;top:367.50px;font-size:16px;line-height:16px;font-weight:700;color:#424650;transform:scaleX(1.0006);transform-origin:0 0;">Patterns (-)</div>
<div class="r" style="left:509px;top:361px;width:1px;height:28px;background:#c2c2c2;"></div>
<div class="t" style="left:531.5px;top:367.50px;font-size:16px;line-height:16px;font-weight:700;color:#424650;transform:scaleX(0.9947);transform-origin:0 0;">Visualization</div>
<div class="r" style="left:280px;top:398px;width:1599px;height:1px;background:#c2c2c2;"></div>
<div class="t" style="left:302px;top:412.00px;font-size:20px;line-height:20px;font-weight:700;color:#0f141a;transform:scaleX(0.9128);transform-origin:0 0;">Logs (7)</div>
<div class="r" style="left:1332px;top:404px;width:138px;height:31px;border:2px solid #1465bb;border-radius:16px;"></div>
<div class="t" style="left:1355px;top:413.00px;font-size:14px;line-height:14px;font-weight:700;color:#1465bb;transform:scaleX(0.9981);transform-origin:0 0;">Investigate</div>
<svg class="r" style="left:1438.5px;top:416px;" width="11" height="8" viewBox="0 0 11 8"><path d="M0 0 H11 L5.5 8 Z" fill="#1465bb"/></svg>
<div class="r" style="left:1480px;top:404px;width:156px;height:31px;border:2px solid #1465bb;border-radius:16px;"></div>
<div class="t" style="left:1502.5px;top:413.00px;font-size:14px;line-height:14px;font-weight:700;color:#1465bb;transform:scaleX(0.9826);transform-origin:0 0;">Export results</div>
<svg class="r" style="left:1604.5px;top:416px;" width="11" height="8" viewBox="0 0 11 8"><path d="M0 0 H11 L5.5 8 Z" fill="#1465bb"/></svg>
<div class="r" style="left:1646px;top:404px;width:163px;height:31px;border:2px solid #1465bb;border-radius:16px;"></div>
<div class="t" style="left:1669px;top:413.00px;font-size:14px;line-height:14px;font-weight:700;color:#1465bb;transform:scaleX(0.9851);transform-origin:0 0;">Add to dashboard</div>
<svg class="r" style="left:1835px;top:411px;" width="18" height="18" viewBox="0 0 18 18"><path d="M9 1.5 l1.7 0.3 0.5 2.1 1.6 0.9 2-0.7 1.1 1.3 -0.9 2 0 1.6 1.3 1.6 -0.7 1.6 -2.1 0.4 -1.1 1.3 0 2.1 -1.6 0.6 -1.5-1.5 h-1.6 l-1.5 1.5 -1.6-0.6 0-2.1 -1.1-1.3 -2.1-0.4 -0.7-1.6 1.3-1.6 0-1.6 -0.9-2 1.1-1.3 2 0.7 1.6-0.9 0.5-2.1 z" stroke="#0f141a" stroke-width="1.8" fill="none" stroke-linejoin="round"/><circle cx="9" cy="9" r="2.5" stroke="#0f141a" stroke-width="1.8" fill="none"/></svg>
<div class="r" style="left:280px;top:441px;width:1599px;height:1px;background:#c2c2c2;"></div>
<div class="t" style="left:966.5px;top:455.00px;font-size:14px;line-height:14px;color:#0f141a;transform:scaleX(1.0135);transform-origin:0 0;">Showing 7 of 7 records matched</div>
<div class="r" style="left:966px;top:474px;width:227px;height:0px;border-top:1px dashed #0f141a;"></div>
<svg class="r" style="left:1174px;top:456px;" width="16" height="16" viewBox="0 0 16 16"><circle cx="8" cy="8" r="6.8" stroke="#0f141a" stroke-width="1.8" fill="none"/><path d="M8 7 V12" stroke="#0f141a" stroke-width="1.9"/><circle cx="8" cy="4.6" r="1.1" fill="#0f141a"/></svg>
<div class="t" style="left:872.5px;top:477.50px;font-size:14px;line-height:14px;color:#0f141a;transform:scaleX(0.9977);transform-origin:0 0;">627 records (78.3 kB) scanned in 4.0s @ 158 records/s (19.8 kB/s)</div>
<div class="t" style="left:1784.5px;top:456.25px;font-size:12.5px;line-height:12.5px;color:#1465bb;transform:scaleX(0.9931);transform-origin:0 0;text-decoration:underline;text-underline-offset:1px;">Hide histogram</div>
<div class="t" style="left:321.5px;top:498.00px;font-size:12px;line-height:12px;color:#0f141a;transform:scaleX(0.8972);transform-origin:0 0;">2</div>
<div class="t" style="left:321.5px;top:528.00px;font-size:12px;line-height:12px;color:#0f141a;transform:scaleX(0.8972);transform-origin:0 0;">1</div>
<div class="t" style="left:321.5px;top:558.50px;font-size:12px;line-height:12px;color:#0f141a;transform:scaleX(0.8972);transform-origin:0 0;">0</div>
<div class="r" style="left:330px;top:563px;width:1501px;height:2px;background:#d0d0d0;"></div>
<div class="r" style="left:430px;top:565px;width:1px;height:4px;background:#d0d0d0;"></div>
<div class="t" style="left:430.4px;top:572.00px;font-size:12px;line-height:12px;color:#0f141a;transform:translateX(-50%);">06 AM</div>
<div class="r" style="left:555px;top:565px;width:1px;height:4px;background:#d0d0d0;"></div>
<div class="t" style="left:555.3px;top:572.00px;font-size:12px;line-height:12px;color:#0f141a;transform:translateX(-50%);">06:05</div>
<div class="r" style="left:680px;top:565px;width:1px;height:4px;background:#d0d0d0;"></div>
<div class="t" style="left:680.2px;top:572.00px;font-size:12px;line-height:12px;color:#0f141a;transform:translateX(-50%);">06:10</div>
<div class="r" style="left:805px;top:565px;width:1px;height:4px;background:#d0d0d0;"></div>
<div class="t" style="left:805.1px;top:572.00px;font-size:12px;line-height:12px;color:#0f141a;transform:translateX(-50%);">06:15</div>
<div class="r" style="left:930px;top:565px;width:1px;height:4px;background:#d0d0d0;"></div>
<div class="t" style="left:930.0px;top:572.00px;font-size:12px;line-height:12px;color:#0f141a;transform:translateX(-50%);">06:20</div>
<div class="r" style="left:1055px;top:565px;width:1px;height:4px;background:#d0d0d0;"></div>
<div class="t" style="left:1054.9px;top:572.00px;font-size:12px;line-height:12px;color:#0f141a;transform:translateX(-50%);">06:25</div>
<div class="r" style="left:1180px;top:565px;width:1px;height:4px;background:#d0d0d0;"></div>
<div class="t" style="left:1179.8000000000002px;top:572.00px;font-size:12px;line-height:12px;color:#0f141a;transform:translateX(-50%);">06:30</div>
<div class="r" style="left:1305px;top:565px;width:1px;height:4px;background:#d0d0d0;"></div>
<div class="t" style="left:1304.7px;top:572.00px;font-size:12px;line-height:12px;color:#0f141a;transform:translateX(-50%);">06:35</div>
<div class="r" style="left:1430px;top:565px;width:1px;height:4px;background:#d0d0d0;"></div>
<div class="t" style="left:1429.6px;top:572.00px;font-size:12px;line-height:12px;color:#0f141a;transform:translateX(-50%);">06:40</div>
<div class="r" style="left:1554px;top:565px;width:1px;height:4px;background:#d0d0d0;"></div>
<div class="t" style="left:1554.5px;top:572.00px;font-size:12px;line-height:12px;color:#0f141a;transform:translateX(-50%);">06:45</div>
<div class="r" style="left:1679px;top:565px;width:1px;height:4px;background:#d0d0d0;"></div>
<div class="t" style="left:1679.4px;top:572.00px;font-size:12px;line-height:12px;color:#0f141a;transform:translateX(-50%);">06:50</div>
<div class="r" style="left:1804px;top:565px;width:1px;height:4px;background:#d0d0d0;"></div>
<div class="t" style="left:1804.3000000000002px;top:572.00px;font-size:12px;line-height:12px;color:#0f141a;transform:translateX(-50%);">06:55</div>
<div class="r" style="left:330px;top:565px;width:1px;height:4px;background:#d0d0d0;"></div>
<div class="r" style="left:1829px;top:565px;width:1px;height:4px;background:#d0d0d0;"></div>
<div class="r" style="left:1705px;top:535px;width:12px;height:30px;background:#0073bb;"></div>
<div class="r" style="left:1718px;top:535px;width:11px;height:30px;background:#0073bb;"></div>
<div class="r" style="left:1730px;top:505px;width:12px;height:60px;background:#0073bb;"></div>
<div class="r" style="left:1743px;top:535px;width:11px;height:30px;background:#0073bb;"></div>
<div class="r" style="left:1768px;top:535px;width:11px;height:30px;background:#0073bb;"></div>
<div class="r" style="left:1780px;top:535px;width:12px;height:30px;background:#0073bb;"></div>
<div class="t" style="left:293px;top:620.00px;font-size:12px;line-height:12px;font-family:'Liberation Mono', monospace;font-weight:700;color:#0f141a;transform:scaleX(0.915);transform-origin:0 0;">#</div>
<div class="t" style="left:383px;top:620.00px;font-size:12px;line-height:12px;font-family:'Liberation Mono', monospace;font-weight:700;color:#0f141a;transform:scaleX(0.9165);transform-origin:0 0;">@timestamp</div>
<div class="r" style="left:547px;top:613px;width:1px;height:24px;background:#c2c2c2;"></div>
<div class="t" style="left:558px;top:620.00px;font-size:12px;line-height:12px;font-family:'Liberation Mono', monospace;font-weight:700;color:#0f141a;transform:scaleX(0.9200);transform-origin:0 0;">@message</div>
<svg class="r" style="left:300px;top:661px;" width="10" height="11" viewBox="0 0 10 11"><path d="M0.5 0.5 L9.5 5.5 L0.5 10.5 Z" fill="#0f141a"/></svg>
<div class="t" style="left:321px;top:660.50px;font-size:12px;line-height:12px;font-family:'Liberation Mono', monospace;color:#0f141a;transform:scaleX(0.915);transform-origin:0 0;">1</div>
<div class="t" style="left:384px;top:660.50px;font-size:12px;line-height:12px;font-family:'Liberation Mono', monospace;color:#0f141a;transform:scaleX(0.913);transform-origin:0 0;">2025-01-22T06:54:05.748Z</div>
<div class="t" style="left:559.5px;top:660.50px;font-size:12px;line-height:12px;font-family:'Liberation Mono', monospace;color:#0f141a;transform:scaleX(0.9182);transform-origin:0 0;">Jan 22 06:54:02 ip-10-0-145-39 logger.runJob: ERROR: The job failed with critical error. Please check the job configuration.</div>
<div class="r" style="left:283px;top:679px;width:1595px;height:27px;background:#f3f3f7;"></div>
<svg class="r" style="left:300px;top:688px;" width="10" height="11" viewBox="0 0 10 11"><path d="M0.5 0.5 L9.5 5.5 L0.5 10.5 Z" fill="#0f141a"/></svg>
<div class="t" style="left:321px;top:687.50px;font-size:12px;line-height:12px;font-family:'Liberation Mono', monospace;color:#0f141a;transform:scaleX(0.915);transform-origin:0 0;">2</div>
<div class="t" style="left:384px;top:687.50px;font-size:12px;line-height:12px;font-family:'Liberation Mono', monospace;color:#0f141a;transform:scaleX(0.913);transform-origin:0 0;">2025-01-22T06:53:53.718Z</div>
<div class="t" style="left:559.5px;top:687.50px;font-size:12px;line-height:12px;font-family:'Liberation Mono', monospace;color:#0f141a;transform:scaleX(0.9182);transform-origin:0 0;">Jan 22 06:53:50 ip-10-0-145-39 logger.runJob: ERROR: The job failed with critical error. Please check the job configuration.</div>
<svg class="r" style="left:300px;top:715px;" width="10" height="11" viewBox="0 0 10 11"><path d="M0.5 0.5 L9.5 5.5 L0.5 10.5 Z" fill="#0f141a"/></svg>
<div class="t" style="left:321px;top:714.50px;font-size:12px;line-height:12px;font-family:'Liberation Mono', monospace;color:#0f141a;transform:scaleX(0.915);transform-origin:0 0;">3</div>
<div class="t" style="left:384px;top:714.50px;font-size:12px;line-height:12px;font-family:'Liberation Mono', monospace;color:#0f141a;transform:scaleX(0.913);transform-origin:0 0;">2025-01-22T06:52:34.751Z</div>
<div class="t" style="left:559.5px;top:714.50px;font-size:12px;line-height:12px;font-family:'Liberation Mono', monospace;color:#0f141a;transform:scaleX(0.9182);transform-origin:0 0;">Jan 22 06:52:31 ip-10-0-145-39 logger.runJob: ERROR: The job failed with critical error. Please check the job configuration.</div>
<div class="r" style="left:283px;top:733px;width:1595px;height:27px;background:#f3f3f7;"></div>
<svg class="r" style="left:300px;top:742px;" width="10" height="11" viewBox="0 0 10 11"><path d="M0.5 0.5 L9.5 5.5 L0.5 10.5 Z" fill="#0f141a"/></svg>
<div class="t" style="left:321px;top:741.50px;font-size:12px;line-height:12px;font-family:'Liberation Mono', monospace;color:#0f141a;transform:scaleX(0.915);transform-origin:0 0;">4</div>
<div class="t" style="left:384px;top:741.50px;font-size:12px;line-height:12px;font-family:'Liberation Mono', monospace;color:#0f141a;transform:scaleX(0.913);transform-origin:0 0;">2025-01-22T06:52:19.714Z</div>
<div class="t" style="left:559.5px;top:741.50px;font-size:12px;line-height:12px;font-family:'Liberation Mono', monospace;color:#0f141a;transform:scaleX(0.9182);transform-origin:0 0;">Jan 22 06:52:16 ip-10-0-145-39 logger.runJob: ERROR: The job failed with critical error. Please check the job configuration.</div>
<svg class="r" style="left:300px;top:769px;" width="10" height="11" viewBox="0 0 10 11"><path d="M0.5 0.5 L9.5 5.5 L0.5 10.5 Z" fill="#0f141a"/></svg>
<div class="t" style="left:321px;top:768.50px;font-size:12px;line-height:12px;font-family:'Liberation Mono', monospace;color:#0f141a;transform:scaleX(0.915);transform-origin:0 0;">5</div>
<div class="t" style="left:384px;top:768.50px;font-size:12px;line-height:12px;font-family:'Liberation Mono', monospace;color:#0f141a;transform:scaleX(0.913);transform-origin:0 0;">2025-01-22T06:52:04.674Z</div>
<div class="t" style="left:559.5px;top:768.50px;font-size:12px;line-height:12px;font-family:'Liberation Mono', monospace;color:#0f141a;transform:scaleX(0.9182);transform-origin:0 0;">Jan 22 06:52:01 ip-10-0-145-39 logger.runJob: ERROR: The job failed with critical error. Please check the job configuration.</div>
<div class="r" style="left:283px;top:787px;width:1595px;height:27px;background:#f3f3f7;"></div>
<svg class="r" style="left:300px;top:796px;" width="10" height="11" viewBox="0 0 10 11"><path d="M0.5 0.5 L9.5 5.5 L0.5 10.5 Z" fill="#0f141a"/></svg>
<div class="t" style="left:321px;top:795.50px;font-size:12px;line-height:12px;font-family:'Liberation Mono', monospace;color:#0f141a;transform:scaleX(0.915);transform-origin:0 0;">6</div>
<div class="t" style="left:384px;top:795.50px;font-size:12px;line-height:12px;font-family:'Liberation Mono', monospace;color:#0f141a;transform:scaleX(0.913);transform-origin:0 0;">2025-01-22T06:51:52.640Z</div>
<div class="t" style="left:559.5px;top:795.50px;font-size:12px;line-height:12px;font-family:'Liberation Mono', monospace;color:#0f141a;transform:scaleX(0.9182);transform-origin:0 0;">Jan 22 06:51:49 ip-10-0-145-39 logger.runJob: ERROR: The job failed with critical error. Please check the job configuration.</div>
<svg class="r" style="left:300px;top:823px;" width="10" height="11" viewBox="0 0 10 11"><path d="M0.5 0.5 L9.5 5.5 L0.5 10.5 Z" fill="#0f141a"/></svg>
<div class="t" style="left:321px;top:822.50px;font-size:12px;line-height:12px;font-family:'Liberation Mono', monospace;color:#0f141a;transform:scaleX(0.915);transform-origin:0 0;">7</div>
<div class="t" style="left:384px;top:822.50px;font-size:12px;line-height:12px;font-family:'Liberation Mono', monospace;color:#0f141a;transform:scaleX(0.913);transform-origin:0 0;">2025-01-22T06:51:25.817Z</div>
<div class="t" style="left:559.5px;top:822.50px;font-size:12px;line-height:12px;font-family:'Liberation Mono', monospace;color:#0f141a;transform:scaleX(0.9182);transform-origin:0 0;">Jan 22 06:51:22 ip-10-0-145-39 logger.runJob: ERROR: The job failed with critical error. Please check the job configuration.</div>
<div class="r" style="left:281px;top:843px;width:1597px;height:17px;background:#f1f1f1;"></div>
<div class="r" style="left:298px;top:845px;width:1526px;height:13px;background:#c1c1c1;"></div>
<svg class="r" style="left:286px;top:847px;" width="5" height="9" viewBox="0 0 5 9"><path d="M5 0 L0 4.5 L5 9 Z" fill="#a3a3a3"/></svg>
<svg class="r" style="left:1867px;top:847px;" width="5" height="9" viewBox="0 0 5 9"><path d="M0 0 L5 4.5 L0 9 Z" fill="#505050"/></svg>
<svg class="r" style="left:1349px;top:759px;filter:drop-shadow(1px 1px 1px rgba(0,0,0,0.35));" width="24" height="28" viewBox="0 0 24 28"><path d="M7 15.5 V4 Q7 2 9 2 Q11 2 11 4 V8.5 Q11 7 12.5 7 Q14 7 14 8.5 V9 Q14 8 15.5 8 Q17 8 17 9.5 V10 Q17 9 18.5 9 Q20 9 20 10.5 V18 Q20 25.5 13.5 25.5 Q10 25.5 8 23 L2.5 17 Q1.5 15.8 2.8 15 Q4 14.3 5 15.3 Z" fill="#fff" stroke="#000" stroke-width="1.1" stroke-linejoin="round"/><path d="M11 8.5 V13 M14 9 V13 M17 10 V13" stroke="#000" stroke-width="1.1"/></svg>
</body></html>
